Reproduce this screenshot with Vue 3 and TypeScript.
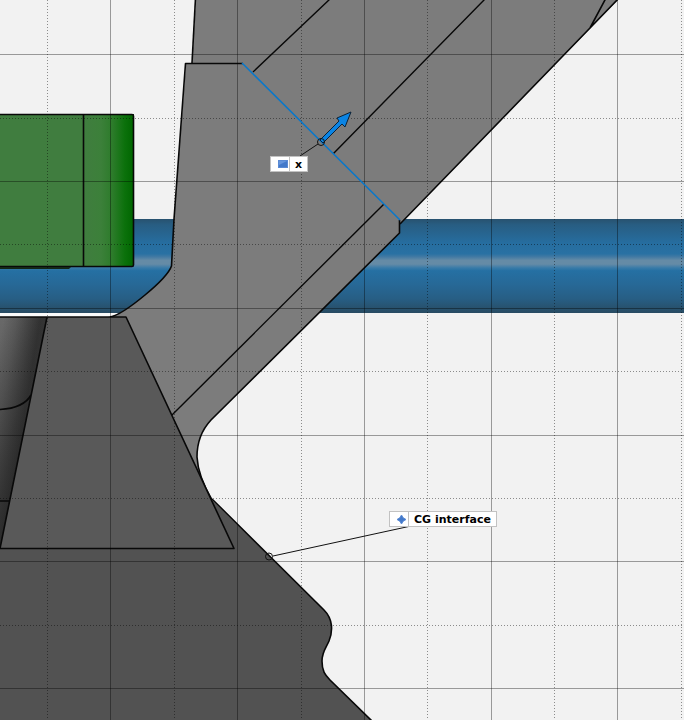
<script setup lang="ts">
interface Callout {
  id: string
  text: string
  kind: 'axis' | 'point'
  x: number
  y: number
}

const majorX: number[] = [110, 237, 364, 491, 617]
const minorX: number[] = [47, 174, 301, 427, 554, 681]
const majorY: number[] = [54, 181, 308, 435, 561, 688]
const minorY: number[] = [118, 244, 371, 498, 625]

const callouts: Callout[] = [
  { id: 'x', text: 'x', kind: 'axis', x: 270, y: 156 },
  { id: 'cg', text: 'CG interface', kind: 'point', x: 389, y: 511 },
]
</script>

<template>
  <main class="viewport">
    <svg class="scene" aria-hidden="true">
      <defs>
        <linearGradient id="pipe" x1="0" y1="0" x2="0" y2="1">
          <stop offset="0" stop-color="#28526f" />
          <stop offset="0.06" stop-color="#285d82" />
          <stop offset="0.17" stop-color="#276692" />
          <stop offset="0.25" stop-color="#266d9f" />
          <stop offset="0.37" stop-color="#2971a3" />
          <stop offset="0.4" stop-color="#4079a3" />
          <stop offset="0.44" stop-color="#658ba6" />
          <stop offset="0.48" stop-color="#658ba6" />
          <stop offset="0.52" stop-color="#397ba8" />
          <stop offset="0.55" stop-color="#2570a3" />
          <stop offset="0.7" stop-color="#276896" />
          <stop offset="0.85" stop-color="#275e84" />
          <stop offset="1" stop-color="#284b62" />
        </linearGradient>
        <linearGradient id="green" x1="0" y1="0" x2="1" y2="0">
          <stop offset="0" stop-color="#407d3f" />
          <stop offset="0.35" stop-color="#3c803a" />
          <stop offset="0.58" stop-color="#2c7b2a" />
          <stop offset="0.82" stop-color="#0b710b" />
          <stop offset="1" stop-color="#006500" />
        </linearGradient>
        <linearGradient id="tube" gradientUnits="userSpaceOnUse" x1="0" y1="340" x2="42" y2="347">
          <stop offset="0" stop-color="#696969" />
          <stop offset="0.3" stop-color="#595959" />
          <stop offset="0.7" stop-color="#3c3c3c" />
          <stop offset="0.85" stop-color="#323232" />
          <stop offset="1" stop-color="#343434" />
        </linearGradient>
        <linearGradient id="tubeFade" x1="0" y1="0" x2="0" y2="1">
          <stop offset="0" stop-color="#222" stop-opacity="0" />
          <stop offset="1" stop-color="#222" stop-opacity="0.55" />
        </linearGradient>
      </defs>

      <rect x="0" y="219" width="100%" height="94" fill="url(#pipe)" />
      <rect x="0" y="313" width="120" height="4" fill="#fafafa" />

      <!-- upper arm -->
      <path d="M196-2 192 64 240 100 400 224 620-2Z" fill="#7c7c7c" />
      <path class="edge" d="M195.500-2 192 63" />
      <path class="edge" d="M400 224 590 28 619-2M590 28 606-2" />
      <path class="edge thin" d="M253 72 330-1M333 154 485-1" />

      <!-- bracket -->
      <path
        d="M186 64H243L400 220V233L211 420Q197 435 197 457Q198 476 212 500L180 520 100 400 108 317Q121 315 145 295Q168 276 172 266L174 219Z"
        fill="#7c7c7c"
      />
      <path class="edge" d="M243 63.500H185.500L174 219 171.500 266Q168 276 145 295Q121 315 110 317" />
      <path class="edge" d="M399.500 220V233L211 420Q197 435 197 457Q198 476 212 500" />
      <path class="edge thin" d="M384 204 172 415" />

      <!-- base body -->
      <path
        d="M0 500H212L324 610C333 619 333 631 329 641C326 648 322 652 322 661C322 671 325 675 330 680L371 720H0Z"
        fill="#525252"
      />
      <path
        class="edge"
        d="M212 499 324 610C333 619 333 631 329 641C326 648 322 652 322 661C322 671 325 675 330 680L373 722"
      />
      <path d="M0 317H47L0 548Z" fill="url(#tube)" />
      <path d="M0 317H47L0 548Z" fill="url(#tubeFade)" />
      <path class="edge" d="M0 409.500Q24 408 31 395M0 501H9" />
      <path d="M47 317H126L234 548H0Z" fill="#595959" />
      <path class="edge" d="M0 317H126L234 548.500H0L47 317" />

      <!-- green block -->
      <rect x="-2" y="114" width="86" height="152" fill="#407d3f" />
      <rect x="83" y="114" width="51" height="152" fill="url(#green)" />
      <path class="edge" d="M0 114.500H132Q133.500 114.500 133.500 116V265Q133.500 266.500 132 266.500H0" />
      <path class="edge" d="M83.500 114V266" />
      <path d="M0 267H71L69 269H0Z" fill="#132817" />

      <g class="grid">
        <line v-for="x in majorX" :key="`vx${x}`" :x1="x + 0.5" :x2="x + 0.5" y1="0" y2="100%" />
        <line v-for="y in majorY" :key="`hy${y}`" x1="0" x2="100%" :y1="y + 0.5" :y2="y + 0.5" />
        <line v-for="x in minorX" :key="`vm${x}`" class="minor" :x1="x + 0.5" :x2="x + 0.5" y1="0" y2="100%" />
        <line v-for="y in minorY" :key="`hm${y}`" class="minor" x1="0" x2="100%" :y1="y + 0.5" :y2="y + 0.5" />
      </g>

      <path class="selected" d="M242 63 400 220" />
      <path class="leader" d="M300 156 318 144M273 556 411 526" />
      <path class="arrow" d="M320 140 339 121 337 118 351 112 345 127 342 124 323 143Z" />
      <circle class="anchor" cx="321" cy="142" r="3.500" />
      <circle class="anchor" cx="269" cy="556.500" r="3.500" />
    </svg>

    <div
      v-for="c in callouts"
      :key="c.id"
      class="callout"
      :style="{ left: `${c.x}px`, top: `${c.y}px` }"
    >
      <span class="glyph">
        <svg v-if="c.kind === 'axis'" width="10" height="8" viewBox="0 0 10 8" aria-hidden="true">
          <rect x="0.500" y="0.500" width="9" height="7" fill="#4379ca" stroke="#5a8ad4" />
          <path d="M1 1H9L1 5Z" fill="#6595dc" />
        </svg>
        <svg v-else width="11" height="11" viewBox="0 0 11 11" aria-hidden="true">
          <path
            d="M5.500 1 7.200 3.800 10 5.500 7.200 7.200 5.500 10 3.800 7.200 1 5.500 3.800 3.800Z"
            fill="#4379ca"
            stroke="#5a8ad4"
          />
        </svg>
      </span>
      <span class="text">{{ c.text }}</span>
    </div>
  </main>
</template>

<style>
body {
  margin: 0;
  background: #f2f2f2;
}
</style>

<style scoped>
.viewport {
  position: relative;
  width: 100%;
  height: 100vh;
  overflow: hidden;
  background: #f2f2f2;
}
.scene {
  display: block;
  width: 100%;
  height: 100%;
}
.edge {
  fill: none;
  stroke: #080808;
  stroke-width: 1.6;
  stroke-linejoin: round;
}
.thin {
  stroke-width: 1.4;
}
.grid line {
  stroke: #000;
  stroke-opacity: 0.37;
  stroke-width: 1;
}
.grid .minor {
  stroke-dasharray: 1 2;
  stroke-opacity: 0.42;
}
.selected {
  fill: none;
  stroke: #0878cc;
  stroke-width: 1.5;
}
.leader {
  fill: none;
  stroke: #111;
  stroke-width: 1;
}
.arrow {
  fill: #0a84e4;
  stroke: #0b2238;
  stroke-width: 1;
}
.anchor {
  fill: none;
  stroke: #111;
  stroke-width: 1;
}
.callout {
  position: absolute;
  display: flex;
  box-sizing: border-box;
  height: 16px;
  border: 1px solid #c2c2c2;
  background: #fff;
  font: bold 11px/16px "DejaVu Sans", Verdana, sans-serif;
  color: #000;
  white-space: nowrap;
}
.glyph {
  display: flex;
  align-items: center;
  justify-content: flex-end;
  box-sizing: border-box;
  width: 19px;
  padding-right: 1px;
  border-right: 1px solid #c2c2c2;
}
.text {
  padding: 0 5px;
}
</style>
